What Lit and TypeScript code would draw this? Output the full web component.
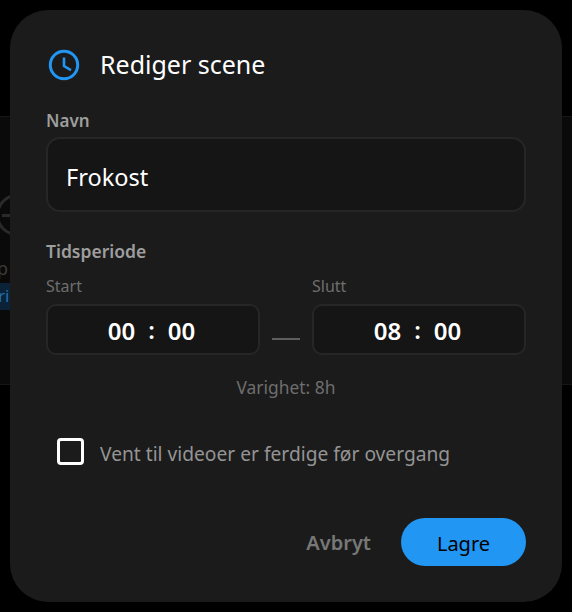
import { LitElement, html, css } from "lit";
import { customElement } from "lit/decorators.js";

@customElement("app-root")
export class AppRoot extends LitElement {
  static styles = css`
    :host { display: block; width: 572px; height: 612px; background: #000; position: relative; overflow: hidden; font-family: "Noto Sans", "Open Sans", sans-serif; }
    .behind { position: absolute; left: 0; right: 0; top: 116px; height: 269px; background: #0a0a0a; border-top: 1px solid #161616; border-bottom: 1px solid #161616; box-sizing: border-box; }
    .ring { position: absolute; left: -4px; top: 77px; width: 42px; height: 42px; border: 3px solid #2a2a2a; border-radius: 50%; box-sizing: border-box; }
    .bar { position: absolute; left: 2px; top: 97px; width: 12px; height: 3px; background: #2a2a2a; }
    .p { position: absolute; left: -3px; top: 139px; font-size: 18px; color: #3a3a3a; line-height: 24px; }
    .chip { position: absolute; left: 0; top: 166px; width: 10px; height: 27px; background: #0b2238; color: #1d6fb0; font-size: 17px; line-height: 26px; overflow: hidden; white-space: nowrap; }
    .chip span { margin-left: -2px; }
    .dialog { position: absolute; left: 10px; top: 10px; width: 552px; height: 592px; box-sizing: border-box; background: #1b1b1b; border-radius: 38px; padding: 35px 36px 36px; display: flex; flex-direction: column; }
    .head { display: flex; align-items: center; gap: 20px; height: 38px; }
    .head svg { width: 32px; height: 32px; display: block; margin-left: 2px; position: relative; top: 1px; }
    h2 { margin: 0; font-size: 25px; font-weight: 400; color: #fff; line-height: 38px; }
    .label { font-size: 17px; font-weight: 600; color: #9e9e9e; line-height: 22px; }
    .name-label { margin-top: 27px; }
    .input { margin-top: 5px; height: 75px; box-sizing: border-box; background: #151515; border: 2px solid #262626; border-radius: 14px; padding: 4px 19px 0 18px; display: flex; align-items: center; font-size: 23.5px; color: #fff; }
    .period-label { margin-top: 28px; font-size: 17.5px; }
    .times { margin-top: 14px; display: grid; grid-template-columns: 214px 1fr 214px; }
    .col { display: flex; flex-direction: column; gap: 7px; }
    .sub { font-size: 16px; color: #6e6e6e; line-height: 21px; }
    .time { height: 51px; box-sizing: border-box; background: #151515; border: 2px solid #262626; border-radius: 10px; display: flex; align-items: center; justify-content: center; gap: 13px; font-size: 24px; font-weight: 600; color: #fff; padding: 2px 3px 0 0; }
    .time .sep { position: relative; top: -1px; }
    .dash { align-self: end; justify-self: center; width: 28px; height: 2px; background: #5f5f5f; margin-bottom: 15px; }
    .dur { margin-top: 21px; text-align: center; font-size: 17.4px; color: #6e6e6e; line-height: 22px; }
    .check { margin-top: 40px; margin-left: 11px; display: flex; align-items: center; gap: 16px; font-size: 19.2px; color: #949494; height: 27px; }
    .check span { position: relative; top: 2px; }
    .box { width: 27px; height: 27px; box-sizing: border-box; border: 3px solid #fff; border-radius: 4px; }
    .actions { margin-top: auto; display: flex; justify-content: flex-end; align-items: center; gap: 30px; }
    .cancel { font-size: 20px; font-weight: 600; color: #777; }
    .save { width: 125px; height: 48px; border-radius: 24px; background: #2196f3; color: #000; font-size: 20px; font-weight: 400; display: flex; align-items: center; justify-content: center; padding-top: 2px; box-sizing: border-box; }
  `;

  render() {
    return html`
      <div class="behind">
        <div class="ring"></div>
        <div class="bar"></div>
        <div class="p">p</div>
        <div class="chip"><span>ri</span></div>
      </div>
      <div class="dialog">
        <div class="head">
          <svg viewBox="0 0 32 32" fill="none" stroke="#2196f3" stroke-width="3">
            <circle cx="16" cy="16" r="13.7"></circle>
            <path d="M16 8.5V17l7 4.2" stroke-width="2.6"></path>
          </svg>
          <h2>Rediger scene</h2>
        </div>
        <div class="label name-label">Navn</div>
        <div class="input">Frokost</div>
        <div class="label period-label">Tidsperiode</div>
        <div class="times">
          <div class="col">
            <div class="sub">Start</div>
            <div class="time"><span>00</span><span class="sep">:</span><span>00</span></div>
          </div>
          <div class="dash"></div>
          <div class="col">
            <div class="sub">Slutt</div>
            <div class="time"><span>08</span><span class="sep">:</span><span>00</span></div>
          </div>
        </div>
        <div class="dur">Varighet: 8h</div>
        <div class="check"><div class="box"></div><span>Vent til videoer er ferdige før overgang</span></div>
        <div class="actions">
          <div class="cancel">Avbryt</div>
          <div class="save">Lagre</div>
        </div>
      </div>
    `;
  }
}
